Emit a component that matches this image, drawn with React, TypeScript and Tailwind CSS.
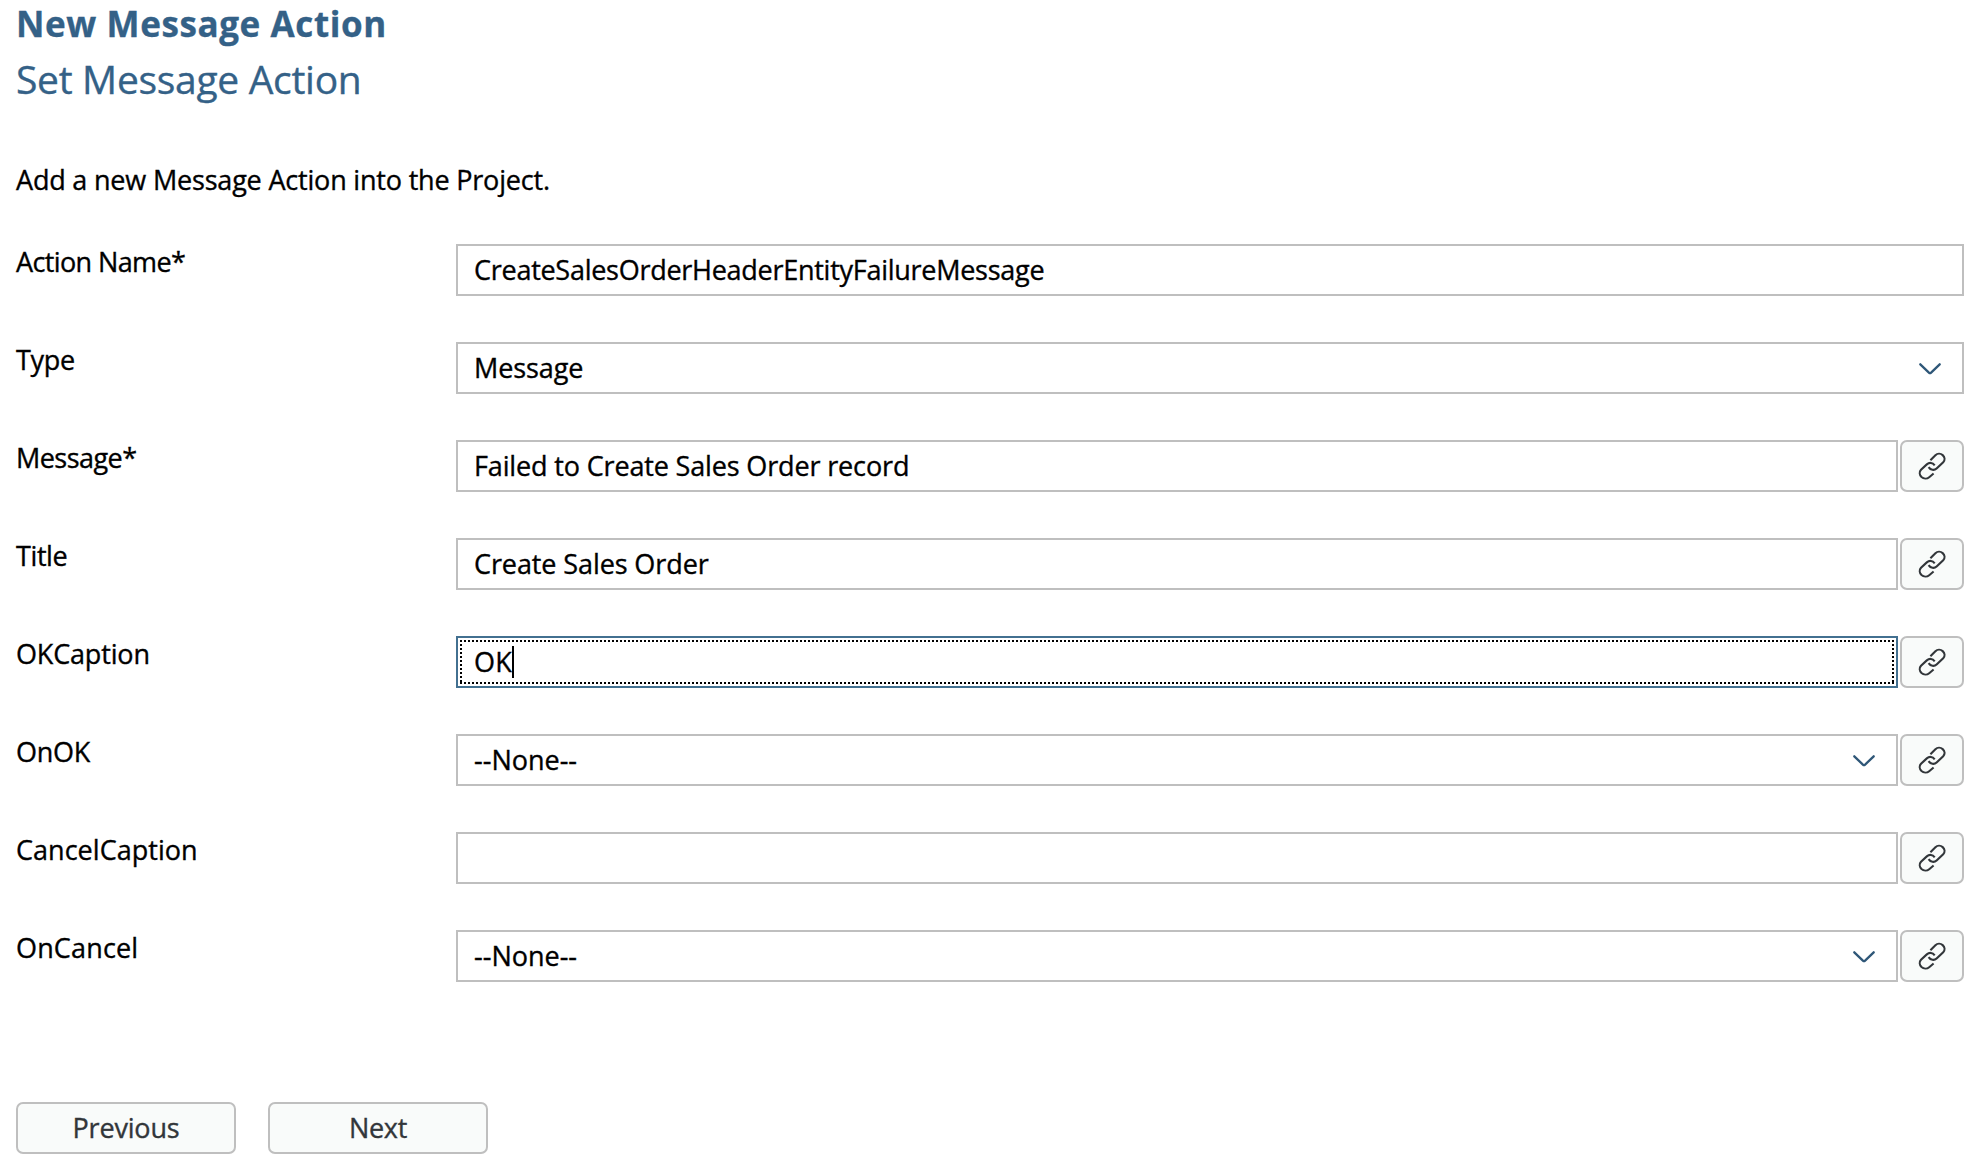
type Field = {
  label: string;
  labelSpacing: string;
  value: string;
  valueSpacing?: string;
  select?: boolean;
  link?: boolean;
  focused?: boolean;
};

const fields: Field[] = [
  { label: "Action Name*", labelSpacing: "tracking-[-0.62px]", value: "CreateSalesOrderHeaderEntityFailureMessage", valueSpacing: "tracking-[-0.27px]" },
  { label: "Type", labelSpacing: "tracking-[-0.31px]", value: "Message", valueSpacing: "tracking-[-0.08px]", select: true },
  { label: "Message*", labelSpacing: "tracking-[-0.55px]", value: "Failed to Create Sales Order record", valueSpacing: "tracking-[-0.15px]", link: true },
  { label: "Title", labelSpacing: "tracking-[-0.4px]", value: "Create Sales Order", valueSpacing: "tracking-[-0.1px]", link: true },
  { label: "OKCaption", labelSpacing: "tracking-[-0.17px]", value: "OK", valueSpacing: "tracking-[0.2px]", link: true, focused: true },
  { label: "OnOK", labelSpacing: "tracking-[-0.25px]", value: "--None--", valueSpacing: "tracking-[0px]", select: true, link: true },
  { label: "CancelCaption", labelSpacing: "tracking-[0.03px]", value: "", link: true },
  { label: "OnCancel", labelSpacing: "tracking-[0.15px]", value: "--None--", valueSpacing: "tracking-[0px]", select: true, link: true },
];

function Chevron() {
  return (
    <svg className="mt-0.5 mr-5 h-3 w-[23px] shrink-0" viewBox="0 0 23 12" fill="none" stroke="#2f5778" strokeWidth="2.3" strokeLinecap="round" strokeLinejoin="round">
      <path d="M1.3 1.3 9.9 9.6Q11 10.6 12.1 9.6L20.7 1.3" />
    </svg>
  );
}

function LinkIcon() {
  return (
    <svg className="h-7 w-7" viewBox="0 0 28 28" fill="none" stroke="#32363a" strokeWidth="2.1">
      <path d="M12.4 8.3 17.4 3.3C19.4 1.3 22.6 1.2 24.7 3.1 26.9 5.1 27.2 8 25.2 10.2L18.6 16.5C16.2 18.8 12.6 18.2 10.6 15.1" />
      <path d="M15.6 21.5 11.2 25.2C9 27 5.6 26.9 3.5 25 1.4 23 1.1 19.9 3 17.8L8.8 12.4C11.4 10.1 14.6 10.5 16.7 13.3" />
    </svg>
  );
}

function FieldBox({ field }: { field: Field }) {
  if (field.focused) {
    return (
      <div className="relative flex h-[52px] flex-1 items-center border-2 border-[#427090] bg-white pl-4">
        <span className={`whitespace-pre ${field.valueSpacing}`}>{field.value}</span>
        <span className="h-8 w-0.5 bg-black" />
        <div className="absolute inset-x-0.5 top-0.5 h-0.5 bg-[repeating-linear-gradient(90deg,#000_0_2px,transparent_2px_4px)]" />
        <div className="absolute inset-x-0.5 bottom-0.5 h-0.5 bg-[repeating-linear-gradient(90deg,#000_0_2px,transparent_2px_4px)]" />
        <div className="absolute inset-y-0.5 left-0.5 w-0.5 bg-[repeating-linear-gradient(180deg,#000_0_2px,transparent_2px_4px)]" />
        <div className="absolute inset-y-0.5 right-0.5 w-0.5 bg-[repeating-linear-gradient(180deg,#000_0_2px,transparent_2px_4px)]" />
      </div>
    );
  }
  return (
    <div className="flex h-[52px] flex-1 items-center justify-between border-2 border-[#bfbfbf] bg-white pl-4">
      <span className={`whitespace-pre ${field.valueSpacing ?? ""}`}>{field.value}</span>
      {field.select && <Chevron />}
    </div>
  );
}

export default function App() {
  return (
    <main className="h-[1168px] w-[1976px] overflow-hidden bg-white pl-4 pr-3 font-['Open_Sans',sans-serif] text-[27px] leading-9 text-black [-webkit-text-stroke:0.35px]">
      <h1 className="text-[35px] leading-[48px] font-bold tracking-[0.6px] text-[#346187]">New Message Action</h1>
      <h2 className="mt-0.5 text-[39px] leading-[58px] tracking-[-0.3px] text-[#346187]">Set Message Action</h2>
      <p className="mt-[53px] leading-[37px] tracking-[-0.19px]">Add a new Message Action into the Project.</p>

      <form className="mt-[46px] flex flex-col gap-[46px]">
        {fields.map((field) => (
          <div key={field.label} className="flex h-[52px]">
            <label className={`w-[440px] leading-9 ${field.labelSpacing}`}>{field.label}</label>
            <div className="flex flex-1 gap-0.5">
              <FieldBox field={field} />
              {field.link && (
                <button type="button" className="flex h-[52px] w-16 items-center justify-center rounded-[7px] border-2 border-[#bfbfbf] bg-[#f9fbfa]">
                  <LinkIcon />
                </button>
              )}
            </div>
          </div>
        ))}
      </form>

      <div className="mt-[120px] flex gap-8 text-[#32363a]">
        <button type="button" className="h-[52px] w-[220px] rounded-[7px] border-2 border-[#bfbfbf] bg-[#f9fbfa] tracking-[-0.18px]">Previous</button>
        <button type="button" className="h-[52px] w-[220px] rounded-[7px] border-2 border-[#bfbfbf] bg-[#f9fbfa] tracking-[-0.34px]">Next</button>
      </div>
    </main>
  );
}
